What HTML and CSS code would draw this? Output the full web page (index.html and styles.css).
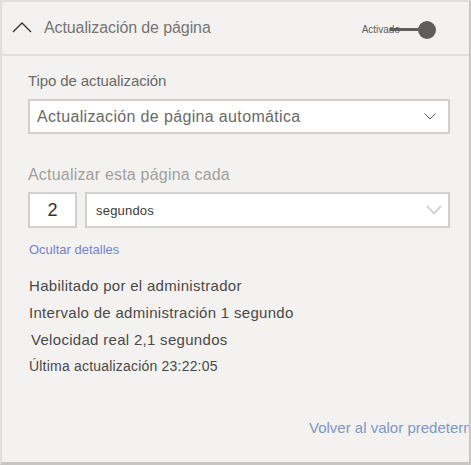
FILE: index.html
```html
<!DOCTYPE html>
<html lang="es">
<head>
<meta charset="utf-8">
<link rel="stylesheet" href="styles.css">
</head>
<body>
<div class="panel">
  <div class="header">
    <svg class="chev-up" width="20" height="11" viewBox="0 0 20 11"><path d="M1 10 L10 1 L19 10" fill="none" stroke="#323130" stroke-width="1.3"/></svg>
    <span class="title">Actualización de página</span>
    <div class="toggle">
      <span class="toggle-label">Activado</span>
      <span class="track"></span>
      <span class="knob"></span>
    </div>
  </div>
  <div class="body">
    <div class="label">Tipo de actualización</div>
    <div class="select select-type">
      <span class="select-text">Actualización de página automática</span>
      <svg class="chev-small" width="12" height="7" viewBox="0 0 12 7"><path d="M0.5 0.5 L6 6 L11.5 0.5" fill="none" stroke="#605e5c" stroke-width="1"/></svg>
    </div>
    <div class="label label-light">Actualizar esta página cada</div>
    <div class="interval-row">
      <div class="number">2</div>
      <div class="select select-unit">
        <span class="unit-text">segundos</span>
        <svg class="chev-large" width="16" height="10" viewBox="0 0 16 10"><path d="M1 1 L8 8.5 L15 1" fill="none" stroke="#c8c6c4" stroke-width="1.5"/></svg>
      </div>
    </div>
    <div class="link">Ocultar detalles</div>
    <div class="details">
      <div class="detail">Habilitado por el administrador</div>
      <div class="detail">Intervalo de administración 1 segundo</div>
      <div class="detail detail-indent">Velocidad real 2,1 segundos</div>
      <div class="detail detail-small">Última actualización 23:22:05</div>
    </div>
    <div class="footer"><span class="reset">Volver al valor predeterminado</span></div>
  </div>
</div>
</body>
</html>
```

FILE: styles.css
```css
html, body {
  margin: 0;
  padding: 0;
  background: #ffffff;
}
.panel {
  width: 471px;
  height: 465px;
  box-sizing: border-box;
  background: #f3f2f1;
  border-top: 2px solid #e1dfdd;
  border-left: 2px solid #e1dfdd;
  border-right: 2px solid #c8c6c4;
  border-bottom: 3px solid #c8c6c4;
  font-family: "Liberation Sans", Arial, sans-serif;
  display: flex;
  flex-direction: column;
  overflow: hidden;
}
.header {
  height: 52px;
  flex: none;
  display: flex;
  align-items: center;
  border-bottom: 2px solid #e1dfdd;
  padding-left: 10px;
}
.chev-up {
  display: block;
  margin-top: -2px;
}
.title {
  margin-left: 12px;
  font-size: 16px;
  color: #767472;
  letter-spacing: -0.1px;
}
.toggle {
  margin-left: auto;
  margin-right: 33px;
  display: flex;
  align-items: center;
  margin-top: 3px;
}
.toggle-label {
  font-size: 10px;
  color: #605e5c;
  position: relative;
  z-index: 1;
}
.track {
  width: 30px;
  height: 3px;
  background: #605e5c;
  margin-left: -10px;
}
.knob {
  width: 18px;
  height: 18px;
  border-radius: 50%;
  background: #605e5c;
  margin-left: -2px;
}
.body {
  flex: 1;
  display: flex;
  flex-direction: column;
  padding-left: 26px;
  padding-right: 19px;
}
.label {
  font-size: 15px;
  line-height: 20px;
  color: #6b6967;
  margin-top: 15px;
  letter-spacing: -0.1px;
}
.label-light {
  font-size: 16px;
  color: #a19f9d;
  margin-top: 31px;
  letter-spacing: 0.2px;
}
.select {
  box-sizing: border-box;
  background: #ffffff;
  border: 2px solid #d2d0ce;
  display: flex;
  align-items: center;
}
.select-type {
  margin-top: 8px;
  height: 35px;
  padding-left: 7px;
  padding-right: 12px;
}
.select-text {
  font-size: 16px;
  color: #6b6967;
  letter-spacing: 0.35px;
}
.chev-small {
  margin-left: auto;
  display: block;
}
.interval-row {
  display: flex;
  gap: 8px;
  margin-top: 7px;
  height: 36px;
}
.number {
  width: 49px;
  box-sizing: border-box;
  background: #ffffff;
  border: 2px solid #d2d0ce;
  display: flex;
  align-items: center;
  justify-content: center;
  font-size: 18px;
  color: #323130;
}
.select-unit {
  flex: 1;
  padding-left: 9px;
  padding-right: 6px;
}
.unit-text {
  font-size: 13px;
  color: #3b3a39;
  letter-spacing: 0.2px;
}
.chev-large {
  margin-left: auto;
  display: block;
}
.link {
  font-size: 13px;
  line-height: 16px;
  color: #7384c4;
  margin-top: 14px;
  margin-left: 1px;
}
.details {
  margin-top: 14px;
  margin-left: 1px;
}
.detail {
  font-size: 15px;
  line-height: 27px;
  color: #4a4846;
  letter-spacing: 0.3px;
}
.detail-indent {
  padding-left: 2px;
}
.detail-small {
  font-size: 14px;
  letter-spacing: 0.2px;
}
.footer {
  margin-top: auto;
  padding-left: 281px;
  padding-bottom: 24px;
  white-space: nowrap;
  line-height: 20px;
}
.reset {
  font-size: 15px;
  color: #7e97c6;
}
```
